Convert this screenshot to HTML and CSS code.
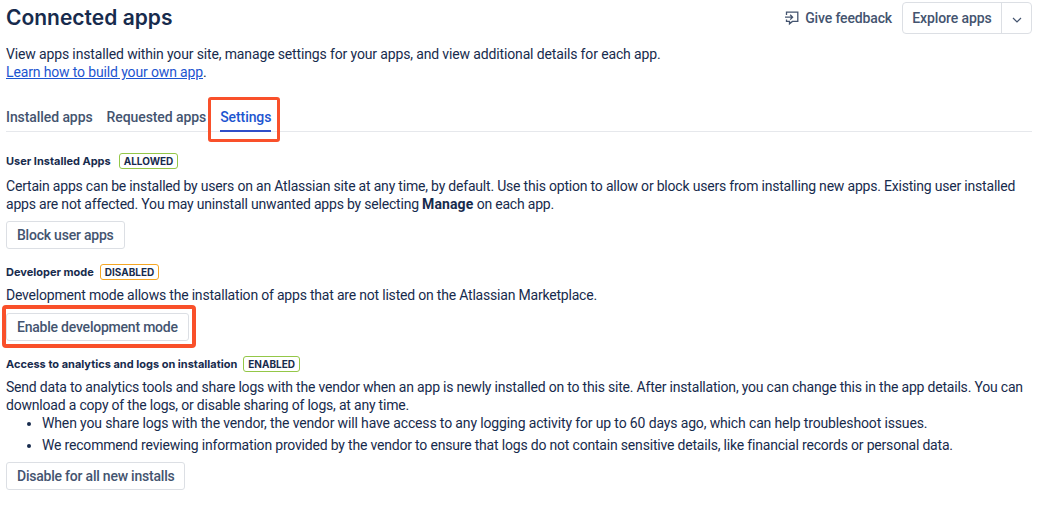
FILE: index.html
```html
<!DOCTYPE html>
<html lang="en">
<head>
    <meta charset="UTF-8">
    <meta name="viewport" content="width=device-width, initial-scale=1.0">
    <title>Connected apps</title>
    <link rel="stylesheet" href="styles.css">
</head>
<body>
    <div class="page">
        <div class="header">
            <h1>Connected apps</h1>
            <div class="actions">
                <a class="feedback" href="#">
                    <svg width="16" height="16" viewBox="0 0 16 16" fill="none" stroke="currentColor" stroke-width="1.3">
                        <path d="M2.5 5V2.2h11.3v9.2H8.4l-2.9 2.4v-2.4H2.5V9.6"/>
                        <path d="M1 7.2h7.6M6.2 4.8l2.4 2.4-2.4 2.4"/>
                    </svg>
                    Give feedback
                </a>
                <div class="split">
                    <button type="button" class="split-main">Explore apps</button>
                    <button type="button" class="split-arrow">
                        <svg width="10" height="6" viewBox="0 0 10 6" fill="none" stroke="currentColor" stroke-width="1.2">
                            <path d="M1 1l4 4 4-4"/>
                        </svg>
                    </button>
                </div>
            </div>
        </div>

        <p class="intro">View apps installed within your site, manage settings for your apps, and view additional details for each app.<br>
            <a href="#">Learn how to build your own app</a>.</p>

        <div class="tabs">
            <span class="tab">Installed apps</span>
            <span class="tab">Requested apps</span>
            <span class="tab active">Settings</span>
        </div>

        <section class="first">
            <h2>User Installed Apps <span class="lozenge green">ALLOWED</span></h2>
            <p>Certain apps can be installed by users on an Atlassian site at any time, by default. Use this option to allow or block users from installing new apps. Existing user installed apps are not affected. You may uninstall unwanted apps by selecting <strong>Manage</strong> on each app.</p>
            <button type="button" class="btn">Block user apps</button>
        </section>

        <section>
            <h2>Developer mode <span class="lozenge orange">DISABLED</span></h2>
            <p>Development mode allows the installation of apps that are not listed on the Atlassian Marketplace.</p>
            <button type="button" class="btn marked">Enable development mode</button>
        </section>

        <section>
            <h2>Access to analytics and logs on installation <span class="lozenge green">ENABLED</span></h2>
            <p>Send data to analytics tools and share logs with the vendor when an app is newly installed on to this site. After installation, you can change this in the app details. You can download a copy of the logs, or disable sharing of logs, at any time.</p>
            <ul>
                <li>When you share logs with the vendor, the vendor will have access to any logging activity for up to 60 days ago, which can help troubleshoot issues.</li>
                <li>We recommend reviewing information provided by the vendor to ensure that logs do not contain sensitive details, like financial records or personal data.</li>
            </ul>
            <button type="button" class="btn">Disable for all new installs</button>
        </section>
    </div>
</body>
</html>
```

FILE: styles.css
```css
body {
    margin: 0;
    font-family: Roboto, "Noto Sans", sans-serif;
    font-size: 14px;
    line-height: 18px;
    letter-spacing: -0.14px;
    color: #172b4d;
    background-color: #fff;
}
.page {
    padding: 0 6px;
}
.header {
    display: flex;
    justify-content: space-between;
    align-items: flex-start;
    height: 45px;
}
h1 {
    margin: 3px 0 0;
    font-family: Inter, sans-serif;
    font-size: 21px;
    line-height: 30px;
    font-weight: 600;
    letter-spacing: 0;
}
.actions {
    display: flex;
    align-items: center;
    gap: 10px;
    padding-top: 2px;
}
.feedback {
    display: flex;
    align-items: center;
    gap: 5px;
    color: #44546f;
    text-decoration: none;
    font-weight: 500;
}
.split {
    display: flex;
    align-items: center;
    height: 30px;
    border: 1px solid #dcdfe4;
    border-radius: 4px;
}
.split button {
    border: none;
    background: none;
    font: inherit;
    font-weight: 500;
    letter-spacing: -0.1px;
    color: #44546f;
    padding: 0;
    height: 30px;
}
.split-main {
    width: 99px;
    border-right: 1px solid #dcdfe4 !important;
}
.split-arrow {
    width: 29px;
}
.intro {
    margin: 0;
    letter-spacing: -0.14px;
}
.intro a {
    color: #1d55d0;
}
.tabs {
    display: flex;
    gap: 14px;
    margin-top: 18px;
    height: 32px;
    border-bottom: 1px solid #e6e8ec;
    font-weight: 500;
    letter-spacing: -0.08px;
    color: #44546f;
}
.tab {
    position: relative;
    line-height: 36px;
    height: 32px;
}
.tab.active {
    color: #1d55d0;
    border-bottom: 2px solid #2f4fc9;
    height: 31px;
}
.tab.active::after {
    content: "";
    position: absolute;
    top: -2px;
    left: -12px;
    right: -9px;
    bottom: -12px;
    border: 3px solid #f9502a;
    border-radius: 3px;
}
section {
    margin-top: 15px;
}
section.first {
    margin-top: 21px;
}
h2 {
    display: flex;
    align-items: center;
    gap: 6px;
    height: 16px;
    margin: 0;
    font-family: Inter, sans-serif;
    font-size: 11px;
    line-height: 16px;
    font-weight: 700;
    letter-spacing: 0;
}
.first h2 {
    gap: 8px;
}
.lozenge {
    padding: 0 4px;
    border: 1px solid;
    border-radius: 3px;
    font-size: 10px;
    line-height: 14px;
}
.green {
    border-color: #94c748;
}
.orange {
    border-color: #f5a623;
}
p {
    margin: 6px 0 0;
    letter-spacing: -0.2px;
}
p strong {
    letter-spacing: 0.1px;
}
.first p {
    margin-top: 8px;
}
ul {
    margin: 0;
    padding-left: 36px;
}
li + li {
    margin-top: 4px;
    letter-spacing: -0.19px;
}
.btn {
    position: relative;
    display: block;
    margin-top: 8px;
    height: 28px;
    padding: 0 10px;
    border: 1px solid #dcdfe4;
    border-radius: 3px;
    background-color: #fff;
    font: inherit;
    font-weight: 500;
    letter-spacing: -0.22px;
    color: #44546f;
}
.btn.marked {
    margin-top: 9px;
}
.btn.marked::after {
    content: "";
    position: absolute;
    top: -9px;
    left: -5px;
    right: -8px;
    bottom: -8px;
    border: 4px solid #f9502a;
    border-radius: 4px;
}
```
